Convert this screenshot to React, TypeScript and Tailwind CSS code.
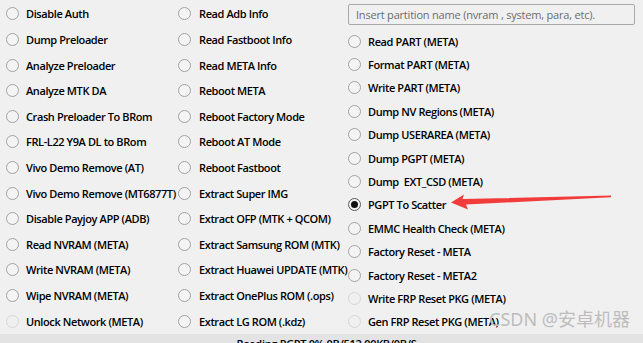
import React from "react";

type Item = { label: string; disabled?: boolean; checked?: boolean };

const col1: Item[] = [
  { label: "Disable Auth" },
  { label: "Dump Preloader" },
  { label: "Analyze Preloader" },
  { label: "Analyze MTK DA" },
  { label: "Crash Preloader To BRom" },
  { label: "FRL-L22 Y9A DL to BRom" },
  { label: "Vivo Demo Remove (AT)" },
  { label: "Vivo Demo Remove (MT6877T)" },
  { label: "Disable Payjoy APP (ADB)" },
  { label: "Read NVRAM (META)" },
  { label: "Write NVRAM (META)" },
  { label: "Wipe NVRAM (META)" },
  { label: "Unlock Network (META)", disabled: true },
];

const col2: Item[] = [
  { label: "Read Adb Info" },
  { label: "Read Fastboot Info" },
  { label: "Read META Info" },
  { label: "Reboot META" },
  { label: "Reboot Factory Mode" },
  { label: "Reboot AT Mode" },
  { label: "Reboot Fastboot" },
  { label: "Extract Super IMG" },
  { label: "Extract OFP (MTK + QCOM)" },
  { label: "Extract Samsung ROM (MTK)" },
  { label: "Extract Huawei UPDATE (MTK)" },
  { label: "Extract OnePlus ROM (.ops)" },
  { label: "Extract LG ROM (.kdz)" },
];

const col3: Item[] = [
  { label: "Read PART (META)" },
  { label: "Format PART (META)" },
  { label: "Write PART (META)" },
  { label: "Dump NV Regions (META)" },
  { label: "Dump USERAREA (META)" },
  { label: "Dump PGPT (META)" },
  { label: "Dump  EXT_CSD (META)" },
  { label: "PGPT To Scatter", checked: true },
  { label: "EMMC Health Check (META)" },
  { label: "Factory Reset - META" },
  { label: "Factory Reset - META2" },
  { label: "Write FRP Reset PKG (META)", disabled: true },
  { label: "Gen FRP Reset PKG (META)", disabled: true },
];

function Radio({ item, h, gap }: { item: Item; h: string; gap: string }) {
  return (
    <div className={`flex items-center ${h} ${gap}`}>
      {item.checked ? (
        <span className="w-[13px] h-[13px] rounded-full border border-[#5a5a5a] bg-[#f4f4f4] flex items-center justify-center shrink-0">
          <span className="w-[7px] h-[7px] rounded-full bg-[#111]" />
        </span>
      ) : (
        <span
          className={`w-[13px] h-[13px] rounded-full border shrink-0 ${
            item.disabled ? "border-[#d6d6d6] bg-[#f0f0f0]" : "border-[#a2a2a2] bg-[#f4f4f4]"
          }`}
        />
      )}
      <span className="whitespace-pre text-[11px] font-semibold tracking-[-0.4px] text-black leading-none">
        {item.label}
      </span>
    </div>
  );
}

export default function App() {
  return (
    <div
      className="relative w-[643px] h-[343px] bg-[#f0f0f0] overflow-hidden flex flex-col"
      style={{ fontFamily: '"Open Sans", "Noto Sans", sans-serif' }}
    >
      <div className="flex h-[334px]">
        <div className="w-[172px] pl-[6px] pt-[1.2px] flex flex-col">
          {col1.map((it) => (
            <Radio key={it.label} item={it} h="h-[25.67px]" gap="gap-[7px]" />
          ))}
        </div>
        <div className="w-[171px] pl-[6px] pt-[1.2px] flex flex-col">
          {col2.map((it) => (
            <Radio key={it.label} item={it} h="h-[25.67px]" gap="gap-[8px]" />
          ))}
        </div>
        <div className="flex-1 pl-[5px] pt-[4px] flex flex-col">
          <div className="w-[287px] h-[21px] border border-[#a9a9a9] rounded-[2px] bg-[#f0f0f0] flex items-center pl-[7px] text-[11px] tracking-[-0.2px] text-[#6d6d6d] leading-none">
            Insert partition name (nvram , system, para, etc).
          </div>
          <div className="pt-[4.3px] flex flex-col">
            {col3.map((it) => (
              <Radio key={it.label} item={it} h="h-[23.42px]" gap="gap-[7px]" />
            ))}
          </div>
        </div>
      </div>
      <div className="flex-1 bg-[#e3e3e3] flex justify-center">
        <span className="text-[11px] font-semibold tracking-[-0.3px] text-black leading-none pt-[4px] pl-[10px]">
          Reading PGPT 0% 0B/512.00KB/0B/S
        </span>
      </div>

      <div
        className="absolute left-[489px] top-[310px] text-[18px] text-[#bdbdbd] leading-none"
        style={{ fontFamily: '"Noto Sans", "Noto Sans CJK SC", sans-serif' }}
      >
        CSDN @安卓机器
      </div>

      <svg className="absolute left-0 top-0" width="643" height="343" viewBox="0 0 643 343">
        <polygon
          points="451,202.5 464,194.5 462.5,199 611,195.5 611,197.2 466,204.5 468,209.5"
          fill="#f23b3b"
        />
      </svg>
    </div>
  );
}
